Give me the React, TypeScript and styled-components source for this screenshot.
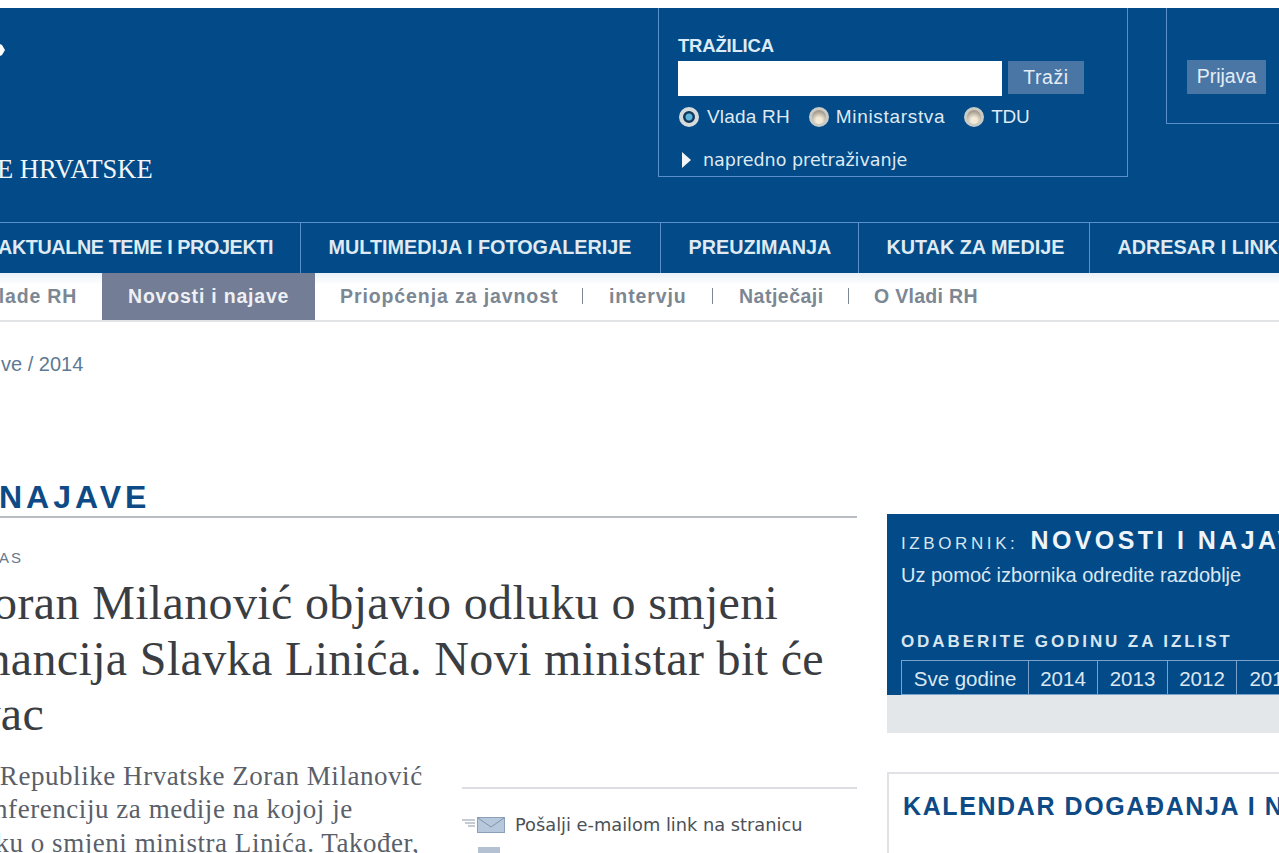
import React from "react";
import styled, { createGlobalStyle } from "styled-components";

const Global = createGlobalStyle`
  html, body { margin: 0; padding: 0; background: #fff; overflow: hidden; }
  body { width: 1279px; height: 853px; font-family: "Liberation Sans", Arial, sans-serif; }
`;

const Page = styled.div`
  width: 1279px;
  height: 853px;
  overflow: hidden;
  padding-top: 8px;
  box-sizing: border-box;
`;

const Header = styled.header`
  height: 214px;
  background: #024a88;
  display: flex;
  position: relative;
`;

const Logo = styled.div`
  width: 658px;
  flex: none;
  display: flex;
  flex-direction: column;
  justify-content: flex-end;
  padding-bottom: 39px;
  box-sizing: border-box;
`;

const LogoMark = styled.svg`
  position: absolute;
  left: 0;
  top: 32px;
`;

const LogoText = styled.div`
  font-family: "Liberation Serif", serif;
  font-size: 26.5px;
  line-height: 28px;
  color: #f2f6f9;
  white-space: nowrap;
  margin-left: -3px;
`;

const SearchBox = styled.form`
  width: 470px;
  height: 169px;
  flex: none;
  border: solid #5a8fcc;
  border-width: 0 1px 1px 1px;
  box-sizing: border-box;
  padding: 28px 0 0 19px;
  margin: 0;
`;

const SearchLabel = styled.div`
  font-size: 18.5px;
  line-height: 20px;
  font-weight: 700;
  letter-spacing: -0.2px;
  color: #dcebf7;
`;

const SearchRow = styled.div`
  display: flex;
  gap: 6px;
  margin-top: 5px;
`;

const SearchInput = styled.div`
  width: 324px;
  height: 35px;
  background: #fff;
`;

const FlatButton = styled.div`
  background: #4a76a6;
  color: #e3edf5;
  font-size: 19.5px;
  text-align: center;
`;

const SearchButton = styled(FlatButton)`
  width: 76px;
  height: 33px;
  line-height: 32px;
  letter-spacing: 0.6px;
`;

const LoginButton = styled(FlatButton)`
  width: 79px;
  height: 34px;
  line-height: 32px;
`;

const Radios = styled.div`
  display: flex;
  align-items: center;
  margin-top: 9px;
  height: 24px;
  margin-left: 1px;
`;

const Radio = styled.span<{ $on?: boolean }>`
  width: 20px;
  height: 20px;
  flex: none;
  border-radius: 50%;
  box-sizing: border-box;
  border: ${(p) => (p.$on ? "4px solid #d6dcdc" : "3px solid #c9cbc6")};
  background: ${(p) =>
    p.$on
      ? "radial-gradient(circle, #5fb6dc 0 3px, #12385c 4px)"
      : "radial-gradient(circle at 50% 75%, #f3ead8 0 3px, #a89d8e 9px)"};
`;

const RadioLabel = styled.span<{ $gap: number; $ml: number; $ls: number }>`
  font-size: 19px;
  line-height: 24px;
  color: #dfe9f2;
  margin: 0 ${(p) => p.$gap}px 0 ${(p) => p.$ml}px;
  letter-spacing: ${(p) => p.$ls}px;
  white-space: nowrap;
`;

const Advanced = styled.div`
  display: flex;
  align-items: center;
  gap: 12px;
  margin: 19px 0 0 4px;
  font-family: "DejaVu Sans", sans-serif;
  font-size: 17.5px;
  line-height: 24px;
  color: #dfe9f2;
  white-space: nowrap;
`;

const Arrow = styled.span`
  width: 0;
  height: 0;
  border-style: solid;
  border-width: 8px 0 8px 9px;
  border-color: transparent transparent transparent #f1f5f8;
`;

const LoginBox = styled.div`
  width: 150px;
  height: 116px;
  flex: none;
  margin-left: 38px;
  border: solid #5a8fcc;
  border-width: 0 0 1px 1px;
  box-sizing: border-box;
  padding-top: 52px;
  padding-left: 20px;
`;

const MainNav = styled.nav`
  height: 51px;
  background: #024a88;
  border-top: 1px solid #5a8fcc;
  box-sizing: border-box;
  display: flex;
  overflow: hidden;
`;

const MainItem = styled.div<{ $w: number; $first?: boolean }>`
  width: ${(p) => p.$w}px;
  flex: none;
  box-sizing: border-box;
  padding-left: ${(p) => (p.$first ? 0 : 27.5)}px;
  margin-left: ${(p) => (p.$first ? -2 : 0)}px;
  letter-spacing: ${(p) => (p.$first ? -0.4 : 0)}px;
  border-right: 1px solid #5a8fcc;
  font-size: 19.8px;
  font-weight: 700;
  line-height: 48px;
  color: #dfeaf3;
  white-space: nowrap;
`;

const SubNav = styled.nav`
  height: 49px;
  background: linear-gradient(#e9f1f7, #fff 12px);
  border-bottom: 2px solid #e2e3e5;
  box-sizing: border-box;
  display: flex;
  align-items: stretch;
  overflow: hidden;
`;

const SubItem = styled.div<{ $active?: boolean; $w: number; $sep?: boolean; $pad: number; $ls: number }>`
  width: ${(p) => p.$w}px;
  flex: none;
  box-sizing: border-box;
  padding-left: ${(p) => p.$pad}px;
  font-size: 19.5px;
  letter-spacing: ${(p) => p.$ls}px;
  font-weight: 700;
  line-height: 46px;
  white-space: nowrap;
  color: ${(p) => (p.$active ? "#eef0f3" : "#7c8794")};
  background: ${(p) => (p.$active ? "#737d95" : "transparent")};
  position: relative;
  &::after {
    content: ${(p) => (p.$sep ? '""' : "none")};
    position: absolute;
    right: 0;
    top: 15px;
    width: 1px;
    height: 16px;
    background: #7c8794;
  }
`;

const Breadcrumb = styled.div`
  margin: 31px 0 0 1px;
  font-size: 20px;
  line-height: 22px;
  color: #5d7a94;
`;

const Columns = styled.div`
  display: flex;
  margin-top: 140px;
  gap: 30px;
`;

const Article = styled.main`
  width: 857px;
  flex: none;
  margin-top: -38px;
`;

const SectionTitle = styled.h2`
  margin: 0;
  height: 41px;
  box-sizing: border-box;
  border-bottom: 2px solid #b9bcc1;
  text-indent: -1px;
  font-size: 32px;
  line-height: 40px;
  letter-spacing: 4px;
  font-weight: 700;
  color: #0e4a85;
  white-space: nowrap;
`;

const Kicker = styled.div`
  margin: 31px 0 0 -1px;
  font-size: 15px;
  line-height: 18px;
  letter-spacing: 2px;
  color: #69788a;
`;

const Title = styled.h1`
  margin: 8px 0 0 0;
  font-family: "Liberation Serif", serif;
  font-weight: 400;
  font-size: 48px;
  line-height: 55.5px;
  letter-spacing: 0.35px;
  color: #3a3d42;
  white-space: nowrap;
`;

const TextLine = styled.span<{ $x: number }>`
  display: block;
  margin-left: ${(p) => p.$x}px;
`;

const Lower = styled.div`
  display: flex;
  margin-top: 18px;
`;

const Lead = styled.p`
  width: 462px;
  flex: none;
  margin: 0;
  font-family: "Liberation Serif", serif;
  font-size: 27px;
  line-height: 33.5px;
  letter-spacing: 0.55px;
  color: #5a5f69;
  white-space: nowrap;
`;

const Tools = styled.div`
  flex: 1;
  margin-top: 27px;
  border-top: 2px solid #dcdde0;
  padding-top: 24px;
`;

const ToolRow = styled.div`
  display: flex;
  align-items: center;
  gap: 9px;
  font-family: "DejaVu Sans", sans-serif;
  font-size: 17.8px;
  line-height: 24px;
  color: #4b5056;
  white-space: nowrap;
`;

const ToolSquare = styled.div`
  margin: 10px 0 0 16px;
  width: 22px;
  height: 20px;
  background: #b4c1d2;
`;

const Sidebar = styled.aside`
  flex: 1;
  min-width: 0;
  margin-top: -1px;
`;

const MenuCard = styled.section`
  height: 219px;
  background: #e4e7ea;
`;

const MenuBlue = styled.div`
  height: 181px;
  background: #024a88;
  padding: 12px 0 0 14px;
  box-sizing: border-box;
`;

const MenuHead = styled.div`
  display: flex;
  align-items: baseline;
  gap: 12px;
  white-space: nowrap;
`;

const MenuLabel = styled.span`
  font-size: 17px;
  letter-spacing: 3.6px;
  color: #d8e6f1;
`;

const MenuName = styled.span`
  font-size: 25px;
  font-weight: 700;
  letter-spacing: 3.4px;
  color: #eef4f8;
`;

const MenuHint = styled.div`
  margin-top: 8px;
  font-size: 20px;
  line-height: 24px;
  color: #dbe7f1;
  white-space: nowrap;
`;

const YearLabel = styled.div`
  margin-top: 45px;
  font-size: 17px;
  font-weight: 700;
  letter-spacing: 2.9px;
  line-height: 20px;
  color: #d8e6f1;
  white-space: nowrap;
`;

const YearRow = styled.div`
  display: flex;
  margin-top: 8px;
  border-left: 1px solid #78a3cc;
`;

const Year = styled.div<{ $w: number }>`
  width: ${(p) => p.$w}px;
  flex: none;
  box-sizing: border-box;
  height: 35px;
  border: solid #78a3cc;
  border-width: 1px 1px 1px 0;
  text-align: center;
  font-size: 20.5px;
  line-height: 36px;
  color: #dbe7f1;
  white-space: nowrap;
`;

const CalendarCard = styled.section`
  margin-top: 39px;
  border: solid #e0e2e5;
  border-width: 2px 0 0 2px;
  height: 100px;
  padding: 16px 0 0 14px;
`;

const CalendarTitle = styled.h3`
  margin: 0;
  font-size: 25px;
  line-height: 32px;
  letter-spacing: 1.6px;
  font-weight: 700;
  color: #0e4a85;
  white-space: nowrap;
`;

const mainItems = [
  { label: "AKTUALNE TEME I PROJEKTI", w: 303 },
  { label: "MULTIMEDIJA I FOTOGALERIJE", w: 360 },
  { label: "PREUZIMANJA", w: 198 },
  { label: "KUTAK ZA MEDIJE", w: 231 },
  { label: "ADRESAR I LINKOVI", w: 260 },
];

const subItems = [
  { label: "Vlade RH", w: 102, pad: 0, x: -15, ls: 0.8 },
  { label: "Novosti i najave", w: 213, pad: 26, active: true, x: 0, ls: 0.8 },
  { label: "Priopćenja za javnost", w: 268, pad: 25, sep: true, x: 0, ls: 0.9 },
  { label: "intervju", w: 130, pad: 26, sep: true, x: 0, ls: 0.9 },
  { label: "Natječaji", w: 136, pad: 26, sep: true, x: 0, ls: 0.5 },
  { label: "O Vladi RH", w: 200, pad: 25, x: 0, ls: 0.3 },
];

const years = [
  { label: "Sve godine", w: 127 },
  { label: "2014", w: 69 },
  { label: "2013", w: 70 },
  { label: "2012", w: 69 },
  { label: "2011", w: 70 },
];

const titleLines = [
  { text: "Premijer Zoran Milanović objavio odluku o smjeni", x: -217 },
  { text: "ministra financija Slavka Linića. Novi ministar bit će", x: -216 },
  { text: "Boris Lalovac", x: -231 },
];

const leadLines = [
  { text: "Predsjednik Vlade Republike Hrvatske Zoran Milanović", x: -215 },
  { text: "održao je konferenciju za medije na kojoj je", x: -146 },
  { text: "objavio odluku o smjeni ministra Linića. Također,", x: -147 },
];

export default function App() {
  return (
    <Page>
      <Global />
      <Header>
        <LogoMark width="6" height="20" viewBox="0 0 6 20">
          <path d="M0 4 L2 5 L5 10 L2 15 L0 16 Z" fill="#fff" />
        </LogoMark>
        <Logo>
          <LogoText>E HRVATSKE</LogoText>
        </Logo>
        <SearchBox>
          <SearchLabel>TRAŽILICA</SearchLabel>
          <SearchRow>
            <SearchInput />
            <SearchButton>Traži</SearchButton>
          </SearchRow>
          <Radios>
            <Radio $on />
            <RadioLabel $ml={8} $gap={19} $ls={0.19}>Vlada RH</RadioLabel>
            <Radio />
            <RadioLabel $ml={7} $gap={19} $ls={0.67}>Ministarstva</RadioLabel>
            <Radio />
            <RadioLabel $ml={7} $gap={0} $ls={-0.3}>TDU</RadioLabel>
          </Radios>
          <Advanced>
            <Arrow />
            napredno pretraživanje
          </Advanced>
        </SearchBox>
        <LoginBox>
          <LoginButton>Prijava</LoginButton>
        </LoginBox>
      </Header>
      <MainNav>
        {mainItems.map((m, i) => (
          <MainItem key={m.label} $w={m.w} $first={i === 0}>
            {m.label}
          </MainItem>
        ))}
      </MainNav>
      <SubNav>
        {subItems.map((s) => (
          <SubItem key={s.label} $w={s.w} $pad={s.pad} $active={s.active} $sep={s.sep} $ls={s.ls}>
            <TextLine $x={s.x}>{s.label}</TextLine>
          </SubItem>
        ))}
      </SubNav>
      <Breadcrumb>ve / 2014</Breadcrumb>
      <Columns>
        <Article>
          <SectionTitle>NAJAVE</SectionTitle>
          <Kicker>AS</Kicker>
          <Title>
            {titleLines.map((l) => (
              <TextLine key={l.text} $x={l.x}>{l.text}</TextLine>
            ))}
          </Title>
          <Lower>
            <Lead>
              {leadLines.map((l) => (
                <TextLine key={l.text} $x={l.x}>{l.text}</TextLine>
              ))}
            </Lead>
            <Tools>
              <ToolRow>
                <svg width="44" height="18" viewBox="0 0 44 18">
                  <path d="M0 4h13M3 7h10M6 10h7" stroke="#8b98a8" strokeWidth="1" />
                  <rect x="15.5" y="1.5" width="27" height="15" fill="#b7c8dc" stroke="#8aa0b8" />
                  <path d="M16 2l13 9 13-9" fill="none" stroke="#7f93aa" />
                </svg>
                Pošalji e-mailom link na stranicu
              </ToolRow>
              <ToolSquare />
            </Tools>
          </Lower>
        </Article>
        <Sidebar>
          <MenuCard>
            <MenuBlue>
              <MenuHead>
                <MenuLabel>IZBORNIK:</MenuLabel>
                <MenuName>NOVOSTI I NAJAVE</MenuName>
              </MenuHead>
              <MenuHint>Uz pomoć izbornika odredite razdoblje</MenuHint>
              <YearLabel>ODABERITE GODINU ZA IZLIST</YearLabel>
              <YearRow>
                {years.map((y) => (
                  <Year key={y.label} $w={y.w}>
                    {y.label}
                  </Year>
                ))}
              </YearRow>
            </MenuBlue>
          </MenuCard>
          <CalendarCard>
            <CalendarTitle>KALENDAR DOGAĐANJA I NAJAVA</CalendarTitle>
          </CalendarCard>
        </Sidebar>
      </Columns>
    </Page>
  );
}
